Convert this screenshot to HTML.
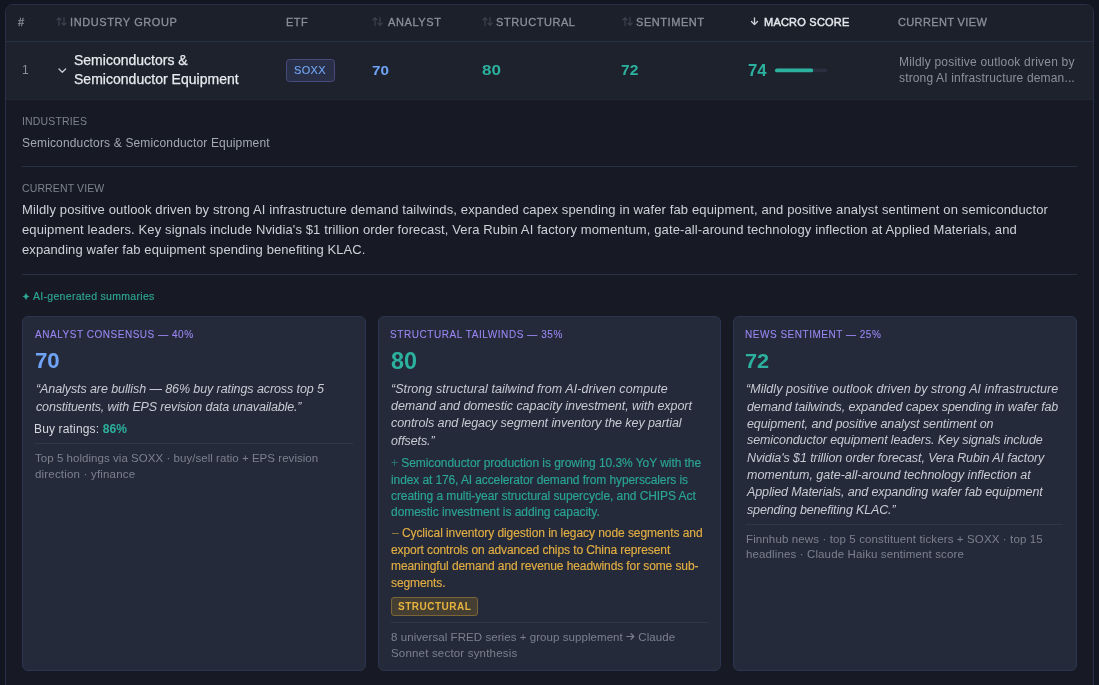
<!DOCTYPE html>
<html><head><meta charset="utf-8">
<style>
*{margin:0;padding:0;box-sizing:border-box}
html,body{width:1099px;height:685px;overflow:hidden;background:#121620;font-family:"Liberation Sans",sans-serif}
body{position:relative}
.t{position:absolute;white-space:nowrap;line-height:20px;will-change:transform}
.bx{position:absolute}
</style></head><body>
<div class="bx" style="left:5px;top:4px;width:1089px;height:720px;border:1px solid #283047;border-radius:8px;background:#171a25;overflow:hidden">
  <div class="bx" style="left:0;top:0;width:1087px;height:37px;background:#1c202b;border-bottom:1px solid #283047"></div>
  <div class="bx" style="left:0;top:37px;width:1087px;height:58px;background:#1e222d;border-bottom:1px solid #22262f"></div>
</div>
<!-- sort icons -->
<svg class="bx" style="left:0;top:0" width="1099" height="100">
  <g fill="none" stroke="#393e4c" stroke-width="1.4" stroke-linecap="round" stroke-linejoin="round">
    <path d="M59 25.5V17.8M57 19.8L59 17.8L61 19.8M64 17.6V25.3M62 23.3L64 25.3L66 23.3"/>
    <path transform="translate(316 0)" d="M59 25.5V17.8M57 19.8L59 17.8L61 19.8M64 17.6V25.3M62 23.3L64 25.3L66 23.3"/>
    <path transform="translate(426 0)" d="M59 25.5V17.8M57 19.8L59 17.8L61 19.8M64 17.6V25.3M62 23.3L64 25.3L66 23.3"/>
    <path transform="translate(566 0)" d="M59 25.5V17.8M57 19.8L59 17.8L61 19.8M64 17.6V25.3M62 23.3L64 25.3L66 23.3"/>
  </g>
  <path d="M754.5 17.8V24.6M751.5 21.5L754.5 24.6L757.5 21.5" fill="none" stroke="#d0d2d9" stroke-width="1.3" stroke-linecap="round" stroke-linejoin="round"/>
  <path d="M59 69L62.3 72.2L65.6 69" fill="none" stroke="#c9ccd3" stroke-width="1.3" stroke-linecap="round" stroke-linejoin="round"/>
</svg>
<!-- SOXX badge -->
<div class="bx" style="left:286px;top:59px;width:49px;height:23px;border:1px solid #4a4a7c;background:#2a2f48;border-radius:3.5px"></div>
<!-- bar -->
<svg class="bx" style="left:770px;top:60px" width="64" height="20"><path d="M6.9 10.45H55.1" stroke="#2a2f40" stroke-width="3.8" stroke-linecap="round"/><path d="M6.9 10.45H41.3" stroke="#2bb19d" stroke-width="3.8" stroke-linecap="round"/></svg>

<!-- dividers -->
<div class="bx" style="left:22px;top:166px;width:1055px;height:1px;background:#2a3045"></div>
<div class="bx" style="left:22px;top:274px;width:1055px;height:1px;background:#2a3045"></div>
<!-- star -->
<svg class="bx" style="left:22px;top:292px" width="8" height="9" viewBox="0 0 8 9"><path d="M4 0.5Q4.6 3.9 7.6 4.5Q4.6 5.1 4 8.5Q3.4 5.1 0.4 4.5Q3.4 3.9 4 0.5Z" fill="#2ea794"/></svg>
<!-- cards -->
<div class="bx" style="left:22px;top:316px;width:344px;height:355px;background:#252a3a;border:1px solid #2c354f;border-radius:6px"></div>
<div class="bx" style="left:378px;top:316px;width:343px;height:355px;background:#252a3a;border:1px solid #2c354f;border-radius:6px"></div>
<div class="bx" style="left:733px;top:316px;width:344px;height:355px;background:#252a3a;border:1px solid #2c354f;border-radius:6px"></div>
<div class="bx" style="left:35px;top:443px;width:318px;height:1px;background:#313748"></div>
<div class="bx" style="left:391px;top:622px;width:317px;height:1px;background:#313748"></div>
<div class="bx" style="left:746px;top:524px;width:317px;height:1px;background:#313748"></div>
<!-- structural badge -->
<div class="bx" style="left:391px;top:597px;width:87px;height:19px;border:1px solid #7c6638;background:#453f33;border-radius:3px"></div>
<div class="t" id="t0" style="left:18.00px;top:12.19px;font-size:11px;color:#8a8f9b;letter-spacing:0.000px;-webkit-text-stroke:0.3px #8a8f9b">#</div>
<div class="t" id="t1" style="left:70.15px;top:12.19px;font-size:11px;color:#8a8f9b;letter-spacing:0.588px;-webkit-text-stroke:0.3px #8a8f9b">INDUSTRY GROUP</div>
<div class="t" id="t2" style="left:285.50px;top:12.19px;font-size:11px;color:#8a8f9b;letter-spacing:0.450px;-webkit-text-stroke:0.3px #8a8f9b">ETF</div>
<div class="t" id="t3" style="left:387.60px;top:12.19px;font-size:11px;color:#8a8f9b;letter-spacing:0.600px;-webkit-text-stroke:0.3px #8a8f9b">ANALYST</div>
<div class="t" id="t4" style="left:495.95px;top:12.19px;font-size:11px;color:#8a8f9b;letter-spacing:0.550px;-webkit-text-stroke:0.3px #8a8f9b">STRUCTURAL</div>
<div class="t" id="t5" style="left:636.10px;top:12.19px;font-size:11px;color:#8a8f9b;letter-spacing:0.562px;-webkit-text-stroke:0.3px #8a8f9b">SENTIMENT</div>
<div class="t" id="t6" style="left:764.45px;top:12.19px;font-size:11px;color:#e4e6eb;letter-spacing:0.225px;-webkit-text-stroke:0.45px #e4e6eb">MACRO SCORE</div>
<div class="t" id="t7" style="left:898.40px;top:12.19px;font-size:11px;color:#8a8f9b;letter-spacing:0.368px;-webkit-text-stroke:0.3px #8a8f9b">CURRENT VIEW</div>
<div class="t" id="t8" style="left:21.75px;top:59.84px;font-size:12px;color:#8a8f9b;letter-spacing:0.000px">1</div>
<div class="t" id="t9" style="left:74.10px;top:50.15px;font-size:14px;color:#e8eaee;letter-spacing:0.000px;-webkit-text-stroke:0.25px #e8eaee">Semiconductors &amp;</div>
<div class="t" id="t10" style="left:74.10px;top:69.15px;font-size:14px;color:#e8eaee;letter-spacing:0.020px;-webkit-text-stroke:0.25px #e8eaee">Semiconductor Equipment</div>
<div class="t" id="t11" style="left:294.43px;top:60.19px;font-size:11px;color:#72aaf8;letter-spacing:0.330px;-webkit-text-stroke:0.1px #72aaf8">SOXX</div>
<div class="t" id="t12" style="left:371.67px;top:60.82px;font-size:13.5px;color:#6fa3f5;letter-spacing:0.000px;font-weight:bold;transform:scaleX(1.1296);transform-origin:0 0">70</div>
<div class="t" id="t13" style="left:481.75px;top:59.97px;font-size:14.5px;color:#2bb19d;letter-spacing:0.000px;font-weight:bold;transform:scaleX(1.1755);transform-origin:0 0">80</div>
<div class="t" id="t14" style="left:621.30px;top:59.97px;font-size:14.5px;color:#2bb19d;letter-spacing:0.000px;font-weight:bold;transform:scaleX(1.0748);transform-origin:0 0">72</div>
<div class="t" id="t15" style="left:747.59px;top:61.05px;font-size:16px;color:#2bb19d;letter-spacing:0.000px;font-weight:bold;transform:scaleX(1.0500);transform-origin:0 0">74</div>
<div class="t" id="t16" style="left:898.60px;top:51.84px;font-size:12px;color:#8b909c;letter-spacing:0.211px">Mildly positive outlook driven by</div>
<div class="t" id="t17" style="left:898.60px;top:67.84px;font-size:12px;color:#8b909c;letter-spacing:0.155px">strong AI infrastructure deman...</div>
<div class="t" id="t18" style="left:21.90px;top:111.36px;font-size:10.5px;color:#7d828e;letter-spacing:0.150px">INDUSTRIES</div>
<div class="t" id="t19" style="left:22.08px;top:132.84px;font-size:12px;color:#a4a8b2;letter-spacing:0.157px">Semiconductors &amp; Semiconductor Equipment</div>
<div class="t" id="t20" style="left:21.70px;top:178.36px;font-size:10.5px;color:#7d828e;letter-spacing:0.123px">CURRENT VIEW</div>
<div class="t" id="t21" style="left:22.40px;top:199.99px;font-size:13px;color:#cdd0d7;letter-spacing:0.134px">Mildly positive outlook driven by strong AI infrastructure demand tailwinds, expanded capex spending in wafer fab equipment, and positive analyst sentiment on semiconductor</div>
<div class="t" id="t22" style="left:22.40px;top:219.99px;font-size:13px;color:#cdd0d7;letter-spacing:0.124px">equipment leaders. Key signals include Nvidia's $1 trillion order forecast, Vera Rubin AI factory momentum, gate-all-around technology inflection at Applied Materials, and</div>
<div class="t" id="t23" style="left:22.40px;top:239.99px;font-size:13px;color:#cdd0d7;letter-spacing:0.083px">expanding wafer fab equipment spending benefiting KLAC.</div>
<div class="t" id="t24" style="left:33.20px;top:286.36px;font-size:10.5px;color:#2ea794;letter-spacing:0.300px;-webkit-text-stroke:0.15px #2ea794">AI-generated summaries</div>
<div class="t" id="t25" style="left:35.00px;top:324.53px;font-size:10px;color:#9a86f2;letter-spacing:0.532px;-webkit-text-stroke:0.1px #9a86f2">ANALYST CONSENSUS — 40%</div>
<div class="t" id="t26" style="left:34.67px;top:350.87px;font-size:22px;color:#6fa3f5;letter-spacing:0.000px;font-weight:bold;transform:scaleX(1.0112);transform-origin:0 0">70</div>
<div class="t" id="t27" style="left:36.16px;top:378.67px;font-size:12.5px;color:#c7cad2;letter-spacing:-0.088px;font-style:italic">“Analysts are bullish — 86% buy ratings across top 5</div>
<div class="t" id="t28" style="left:36.16px;top:396.67px;font-size:12.5px;color:#c7cad2;letter-spacing:-0.156px;font-style:italic">constituents, with EPS revision data unavailable.”</div>
<div class="t" id="t29" style="left:34.24px;top:418.84px;font-size:12px;color:#d5d8de;letter-spacing:0.150px">Buy ratings: <b style="color:#2bb19d">86%</b></div>
<div class="t" id="t30" style="left:35.14px;top:448.01px;font-size:11.5px;color:#7b808c;letter-spacing:0.042px">Top 5 holdings via SOXX · buy/sell ratio + EPS revision</div>
<div class="t" id="t31" style="left:35.14px;top:464.01px;font-size:11.5px;color:#7b808c;letter-spacing:0.189px">direction · yfinance</div>
<div class="t" id="t32" style="left:389.70px;top:324.53px;font-size:10px;color:#9a86f2;letter-spacing:0.576px;-webkit-text-stroke:0.1px #9a86f2">STRUCTURAL TAILWINDS — 35%</div>
<div class="t" id="t33" style="left:391.19px;top:350.53px;font-size:23px;color:#2bb19d;letter-spacing:0.000px;font-weight:bold;transform:scaleX(1.0164);transform-origin:0 0">80</div>
<div class="t" id="t34" style="left:391.40px;top:378.67px;font-size:12.5px;color:#c7cad2;letter-spacing:0.055px;font-style:italic">“Strong structural tailwind from AI-driven compute</div>
<div class="t" id="t35" style="left:391.40px;top:395.67px;font-size:12.5px;color:#c7cad2;letter-spacing:-0.053px;font-style:italic">demand and domestic capacity investment, with export</div>
<div class="t" id="t36" style="left:391.40px;top:412.67px;font-size:12.5px;color:#c7cad2;letter-spacing:-0.078px;font-style:italic">controls and legacy segment inventory the key partial</div>
<div class="t" id="t37" style="left:391.40px;top:430.67px;font-size:12.5px;color:#c7cad2;letter-spacing:-0.112px;font-style:italic">offsets.”</div>
<div class="t" id="t38" style="left:390.50px;top:452.84px;font-size:12px;color:#2aa594;letter-spacing:-0.065px;-webkit-text-stroke:0.15px #2aa594"><span style="opacity:.6;font-size:12px">+</span> Semiconductor production is growing 10.3% YoY with the</div>
<div class="t" id="t39" style="left:391.02px;top:469.84px;font-size:12px;color:#2aa594;letter-spacing:-0.106px;-webkit-text-stroke:0.15px #2aa594">index at 176, AI accelerator demand from hyperscalers is</div>
<div class="t" id="t40" style="left:391.02px;top:485.84px;font-size:12px;color:#2aa594;letter-spacing:-0.071px;-webkit-text-stroke:0.15px #2aa594">creating a multi-year structural supercycle, and CHIPS Act</div>
<div class="t" id="t41" style="left:391.02px;top:501.84px;font-size:12px;color:#2aa594;letter-spacing:-0.047px;-webkit-text-stroke:0.15px #2aa594">domestic investment is adding capacity.</div>
<div class="t" id="t42" style="left:391.78px;top:522.84px;font-size:12px;color:#e2ae42;letter-spacing:-0.063px;-webkit-text-stroke:0.15px #e2ae42"><span style="opacity:.6">–</span> Cyclical inventory digestion in legacy node segments and</div>
<div class="t" id="t43" style="left:391.40px;top:539.84px;font-size:12px;color:#e2ae42;letter-spacing:-0.097px;-webkit-text-stroke:0.15px #e2ae42">export controls on advanced chips to China represent</div>
<div class="t" id="t44" style="left:391.40px;top:555.84px;font-size:12px;color:#e2ae42;letter-spacing:-0.104px;-webkit-text-stroke:0.15px #e2ae42">meaningful demand and revenue headwinds for some sub-</div>
<div class="t" id="t45" style="left:391.40px;top:572.84px;font-size:12px;color:#e2ae42;letter-spacing:-0.112px;-webkit-text-stroke:0.15px #e2ae42">segments.</div>
<div class="t" id="t46" style="left:398.40px;top:596.53px;font-size:10px;color:#e6b23e;letter-spacing:0.500px;font-weight:bold">STRUCTURAL</div>
<div class="t" id="t47" style="left:391.02px;top:627.01px;font-size:11.5px;color:#7b808c;letter-spacing:0.064px">8 universal FRED series + group supplement <svg width="9" height="7" viewBox="0 0 9 7" style="vertical-align:1px"><path d="M0.8 3.5H7.8M5 0.7L7.8 3.5L5 6.3" fill="none" stroke="#7b808c" stroke-width="1.2" stroke-linecap="round" stroke-linejoin="round"/></svg> Claude</div>
<div class="t" id="t48" style="left:391.02px;top:643.01px;font-size:11.5px;color:#7b808c;letter-spacing:0.184px">Sonnet sector synthesis</div>
<div class="t" id="t49" style="left:745.35px;top:324.53px;font-size:10px;color:#9a86f2;letter-spacing:0.521px;-webkit-text-stroke:0.1px #9a86f2">NEWS SENTIMENT — 25%</div>
<div class="t" id="t50" style="left:745.21px;top:351.22px;font-size:21px;color:#2bb19d;letter-spacing:0.000px;font-weight:bold;transform:scaleX(1.0322);transform-origin:0 0">72</div>
<div class="t" id="t51" style="left:745.90px;top:378.67px;font-size:12.5px;color:#c7cad2;letter-spacing:0.047px;font-style:italic">“Mildly positive outlook driven by strong AI infrastructure</div>
<div class="t" id="t52" style="left:746.80px;top:396.67px;font-size:12.5px;color:#c7cad2;letter-spacing:-0.119px;font-style:italic">demand tailwinds, expanded capex spending in wafer fab</div>
<div class="t" id="t53" style="left:746.80px;top:413.67px;font-size:12.5px;color:#c7cad2;letter-spacing:-0.084px;font-style:italic">equipment, and positive analyst sentiment on</div>
<div class="t" id="t54" style="left:746.80px;top:429.67px;font-size:12.5px;color:#c7cad2;letter-spacing:-0.115px;font-style:italic">semiconductor equipment leaders. Key signals include</div>
<div class="t" id="t55" style="left:746.80px;top:447.67px;font-size:12.5px;color:#c7cad2;letter-spacing:-0.087px;font-style:italic">Nvidia's $1 trillion order forecast, Vera Rubin AI factory</div>
<div class="t" id="t56" style="left:746.80px;top:464.67px;font-size:12.5px;color:#c7cad2;letter-spacing:-0.009px;font-style:italic">momentum, gate-all-around technology inflection at</div>
<div class="t" id="t57" style="left:746.80px;top:481.67px;font-size:12.5px;color:#c7cad2;letter-spacing:-0.115px;font-style:italic">Applied Materials, and expanding wafer fab equipment</div>
<div class="t" id="t58" style="left:746.80px;top:499.67px;font-size:12.5px;color:#c7cad2;letter-spacing:-0.144px;font-style:italic">spending benefiting KLAC.”</div>
<div class="t" id="t59" style="left:745.78px;top:529.01px;font-size:11.5px;color:#7b808c;letter-spacing:0.123px">Finnhub news · top 5 constituent tickers + SOXX · top 15</div>
<div class="t" id="t60" style="left:745.78px;top:544.01px;font-size:11.5px;color:#7b808c;letter-spacing:0.127px">headlines · Claude Haiku sentiment score</div>
</body></html>
